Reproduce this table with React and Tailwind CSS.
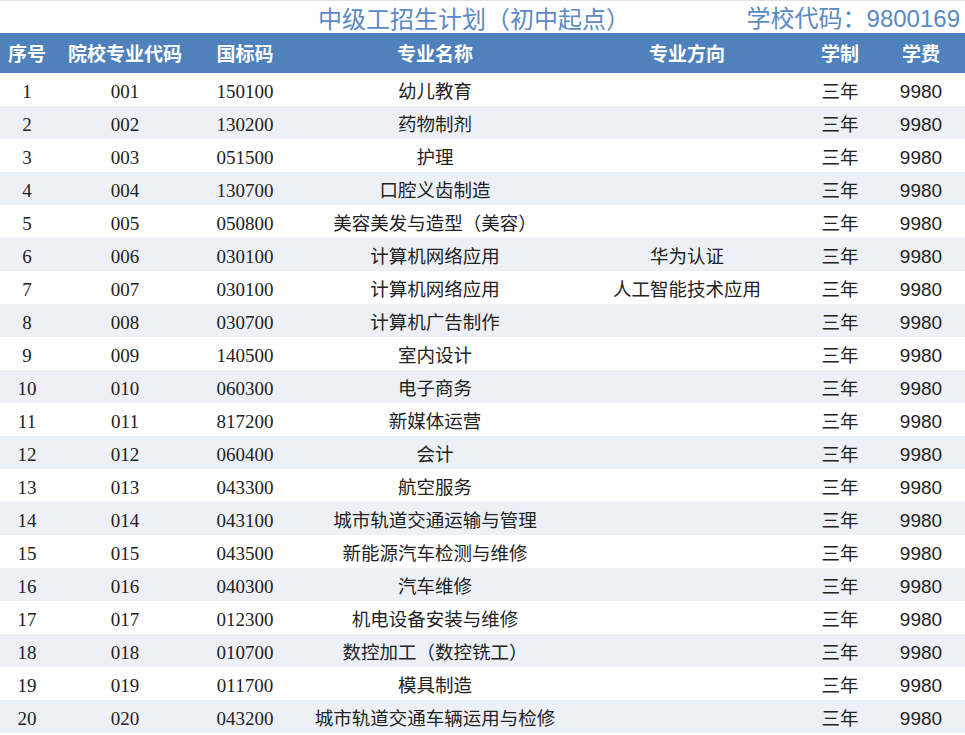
import React from 'react';

const ROWS = [
    ['1', '001', '150100', '幼儿教育', ''],
    ['2', '002', '130200', '药物制剂', ''],
    ['3', '003', '051500', '护理', ''],
    ['4', '004', '130700', '口腔义齿制造', ''],
    ['5', '005', '050800', '美容美发与造型（美容）', ''],
    ['6', '006', '030100', '计算机网络应用', '华为认证'],
    ['7', '007', '030100', '计算机网络应用', '人工智能技术应用'],
    ['8', '008', '030700', '计算机广告制作', ''],
    ['9', '009', '140500', '室内设计', ''],
    ['10', '010', '060300', '电子商务', ''],
    ['11', '011', '817200', '新媒体运营', ''],
    ['12', '012', '060400', '会计', ''],
    ['13', '013', '043300', '航空服务', ''],
    ['14', '014', '043100', '城市轨道交通运输与管理', ''],
    ['15', '015', '043500', '新能源汽车检测与维修', ''],
    ['16', '016', '040300', '汽车维修', ''],
    ['17', '017', '012300', '机电设备安装与维修', ''],
    ['18', '018', '010700', '数控加工（数控铣工）', ''],
    ['19', '019', '011700', '模具制造', ''],
    ['20', '020', '043200', '城市轨道交通车辆运用与检修', ''],
];

const HEADERS = ['序号', '院校专业代码', '国标码', '专业名称', '专业方向', '学制', '学费'];

const COLS = 'grid grid-cols-[54px_142px_98px_282px_222px_84px_78px]';

const App = () => {
    return (
        <div className="w-[965px] h-[735px] bg-white overflow-hidden font-['Liberation_Serif','Noto_Sans_CJK_SC',serif] text-[#222]">
            <div className="h-px bg-[#e2e2e2]" />
            <div className="h-[32px] flex items-center text-[24px] leading-[32px] text-[#5b89c3] pr-[5px] pt-[2px]">
                <span className="pl-[318px] font-['Noto_Sans_CJK_SC',sans-serif]">中级工招生计划（初中起点）</span>
                <span className="ml-auto font-['Noto_Sans_CJK_SC',sans-serif]">
                    学校代码：<span className="font-['Liberation_Sans',sans-serif]">9800169</span>
                </span>
            </div>

            <div className={`${COLS} h-[40px] bg-[#4f81bd] text-white font-bold text-[19px]`}>
                {HEADERS.map(h => (
                    <div key={h} className="flex items-center justify-center pt-[1px] font-['Noto_Sans_CJK_SC',serif]">
                        {h}
                    </div>
                ))}
            </div>

            {ROWS.map((r, i) => (
                <div
                    key={r[0]}
                    className={`${COLS} h-[33px] text-[18.5px] ${i % 2 === 1 ? 'bg-[#edf1f7]' : 'bg-white'}`}
                >
                    <div className="flex items-center justify-center pt-[5px] text-[19px]">{r[0]}</div>
                    <div className="flex items-center justify-center pt-[5px] text-[19px]">{r[1]}</div>
                    <div className="flex items-center justify-center pt-[5px] text-[19px]">{r[2]}</div>
                    <div className="flex items-center justify-center pt-[3px] font-['Noto_Sans_CJK_SC',serif] whitespace-nowrap">{r[3]}</div>
                    <div className="flex items-center justify-center pt-[3px] font-['Noto_Sans_CJK_SC',serif] whitespace-nowrap">{r[4]}</div>
                    <div className="flex items-center justify-center pt-[3px] font-['Noto_Sans_CJK_SC',serif]">三年</div>
                    <div className="flex items-center justify-center pt-[5px] font-['Liberation_Sans',sans-serif] text-[19px]">9980</div>
                </div>
            ))}
        </div>
    );
};

export default App;
